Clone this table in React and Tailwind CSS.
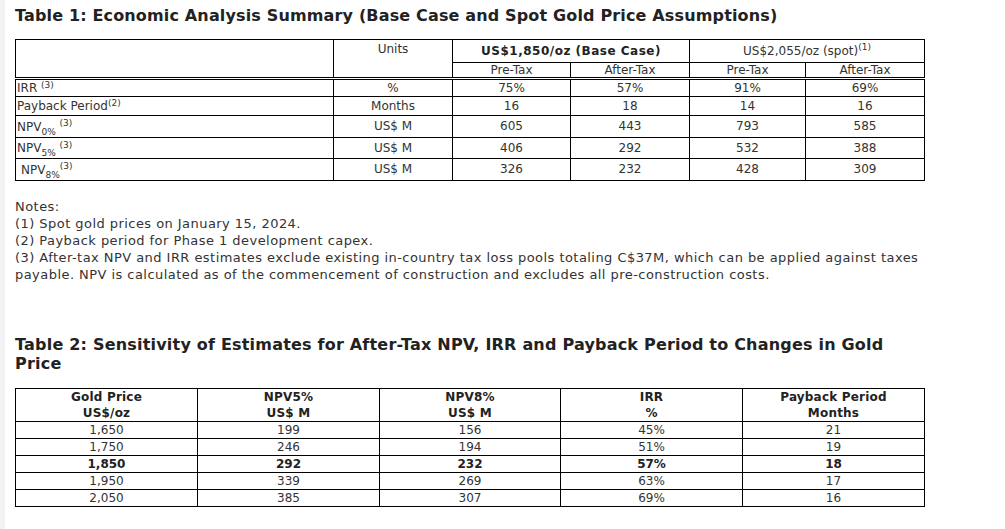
import React from "react";

const Sup = ({ children }) => <sup className="text-[9px]">{children}</sup>;
const Sub = ({ children }) => <sub className="text-[9px] -bottom-[4px]">{children}</sub>;

const t1 = [
  { label: <>IRR <Sup>(3)</Sup></>, unit: "%", v: ["75%", "57%", "91%", "69%"], h: "h-[18px]" },
  { label: <>Payback Period<Sup>(2)</Sup></>, unit: "Months", v: ["16", "18", "14", "16"], h: "h-[19px]" },
  { label: <>NPV<Sub>0%</Sub> <Sup>(3)</Sup></>, unit: "US$ M", v: ["605", "443", "793", "585"], h: "h-[22px]" },
  { label: <>NPV<Sub>5%</Sub> <Sup>(3)</Sup></>, unit: "US$ M", v: ["406", "292", "532", "388"], h: "h-[21px]" },
  { label: <span className="pl-[4px]">NPV<Sub>8%</Sub><Sup>(3)</Sup></span>, unit: "US$ M", v: ["326", "232", "428", "309"], h: "h-[22px]" },
];

const t2 = [
  ["1,650", "199", "156", "45%", "21", false],
  ["1,750", "246", "194", "51%", "19", false],
  ["1,850", "292", "232", "57%", "18", true],
  ["1,950", "339", "269", "63%", "17", false],
  ["2,050", "385", "307", "69%", "16", false],
];

export default function App() {
  return (
    <div className="flex min-h-[529px] w-[1005px] bg-white font-['DejaVu_Sans',Verdana,sans-serif] text-[#333]">
      <div className="w-[5px] shrink-0 bg-[#f2f2f2]" />
      <div className="w-[910px] pl-[10px] pt-[6px] box-content">
        <h2 className="text-[16px] leading-[19px] font-bold tracking-[0.15px] text-[#222]">
          Table 1: Economic Analysis Summary (Base Case and Spot Gold Price Assumptions)
        </h2>
        <table className="mt-[14px] w-[909px] table-fixed border-collapse text-[12px] leading-[15px]">
          <colgroup>
            <col className="w-[318px]" />
            <col className="w-[119px]" />
            <col className="w-[118px]" />
            <col className="w-[119px]" />
            <col className="w-[116px]" />
            <col className="w-[119px]" />
          </colgroup>
          <thead>
            <tr className="h-[23px]">
              <td rowSpan={2} className="border border-double border-black border-b-[3px]" />
              <td rowSpan={2} className="border border-double border-black border-b-[3px] text-center align-top pt-[2px]">Units</td>
              <td colSpan={2} className="border border-black text-center font-bold tracking-[0.5px] text-[#222]">US$1,850/oz (Base Case)</td>
              <td colSpan={2} className="border border-black text-center">
                US$2,055/oz (spot)<Sup>(1)</Sup>
              </td>
            </tr>
            <tr className="h-[16px]">
              {["Pre-Tax", "After-Tax", "Pre-Tax", "After-Tax"].map((s, i) => (
                <td key={i} className="border border-double border-black border-b-[3px] text-center leading-[14px]">{s}</td>
              ))}
            </tr>
          </thead>
          <tbody>
            {t1.map((r, i) => (
              <tr key={i} className={r.h}>
                <td className="border border-black pl-[1px] leading-[14px]">{r.label}</td>
                <td className="border border-black text-center">{r.unit}</td>
                {r.v.map((v, j) => (
                  <td key={j} className="border border-black text-center">{v}</td>
                ))}
              </tr>
            ))}
          </tbody>
        </table>

        <div className="mt-[17px] text-[13px] leading-[17px] tracking-[0.45px]">
          <p>Notes:</p>
          <p>(1) Spot gold prices on January 15, 2024.</p>
          <p>(2) Payback period for Phase 1 development capex.</p>
          <p>
            (3) After-tax NPV and IRR estimates exclude existing in-country tax loss pools totaling C$37M, which can be applied against taxes payable. NPV is calculated as of the commencement of construction and excludes all pre-construction costs.
          </p>
        </div>

        <h2 className="mt-[52px] text-[16px] leading-[19px] font-bold tracking-[0.2px] text-[#222]">
          Table 2: Sensitivity of Estimates for After-Tax NPV, IRR and Payback Period to Changes in Gold Price
        </h2>
        <table className="mt-[15px] w-[909px] table-fixed border-collapse text-[12px] leading-[16px]">
          <colgroup>
            <col className="w-[182px]" />
            <col className="w-[182px]" />
            <col className="w-[181px]" />
            <col className="w-[182px]" />
            <col className="w-[182px]" />
          </colgroup>
          <thead>
            <tr className="h-[33px]">
              {[["Gold Price", "US$/oz"], ["NPV5%", "US$ M"], ["NPV8%", "US$ M"], ["IRR", "%"], ["Payback Period", "Months"]].map((h, i) => (
                <th key={i} className="border border-black text-center font-bold tracking-[0.2px] text-[#222]">
                  {h[0]}
                  <br />
                  {h[1]}
                </th>
              ))}
            </tr>
          </thead>
          <tbody>
            {t2.map((r, i) => (
              <tr key={i} className="h-[17px]">
                {r.slice(0, 5).map((v, j) => (
                  <td key={j} className={`border border-black text-center ${r[5] ? "font-bold text-[#222]" : ""}`}>{v}</td>
                ))}
              </tr>
            ))}
          </tbody>
        </table>
      </div>
    </div>
  );
}
